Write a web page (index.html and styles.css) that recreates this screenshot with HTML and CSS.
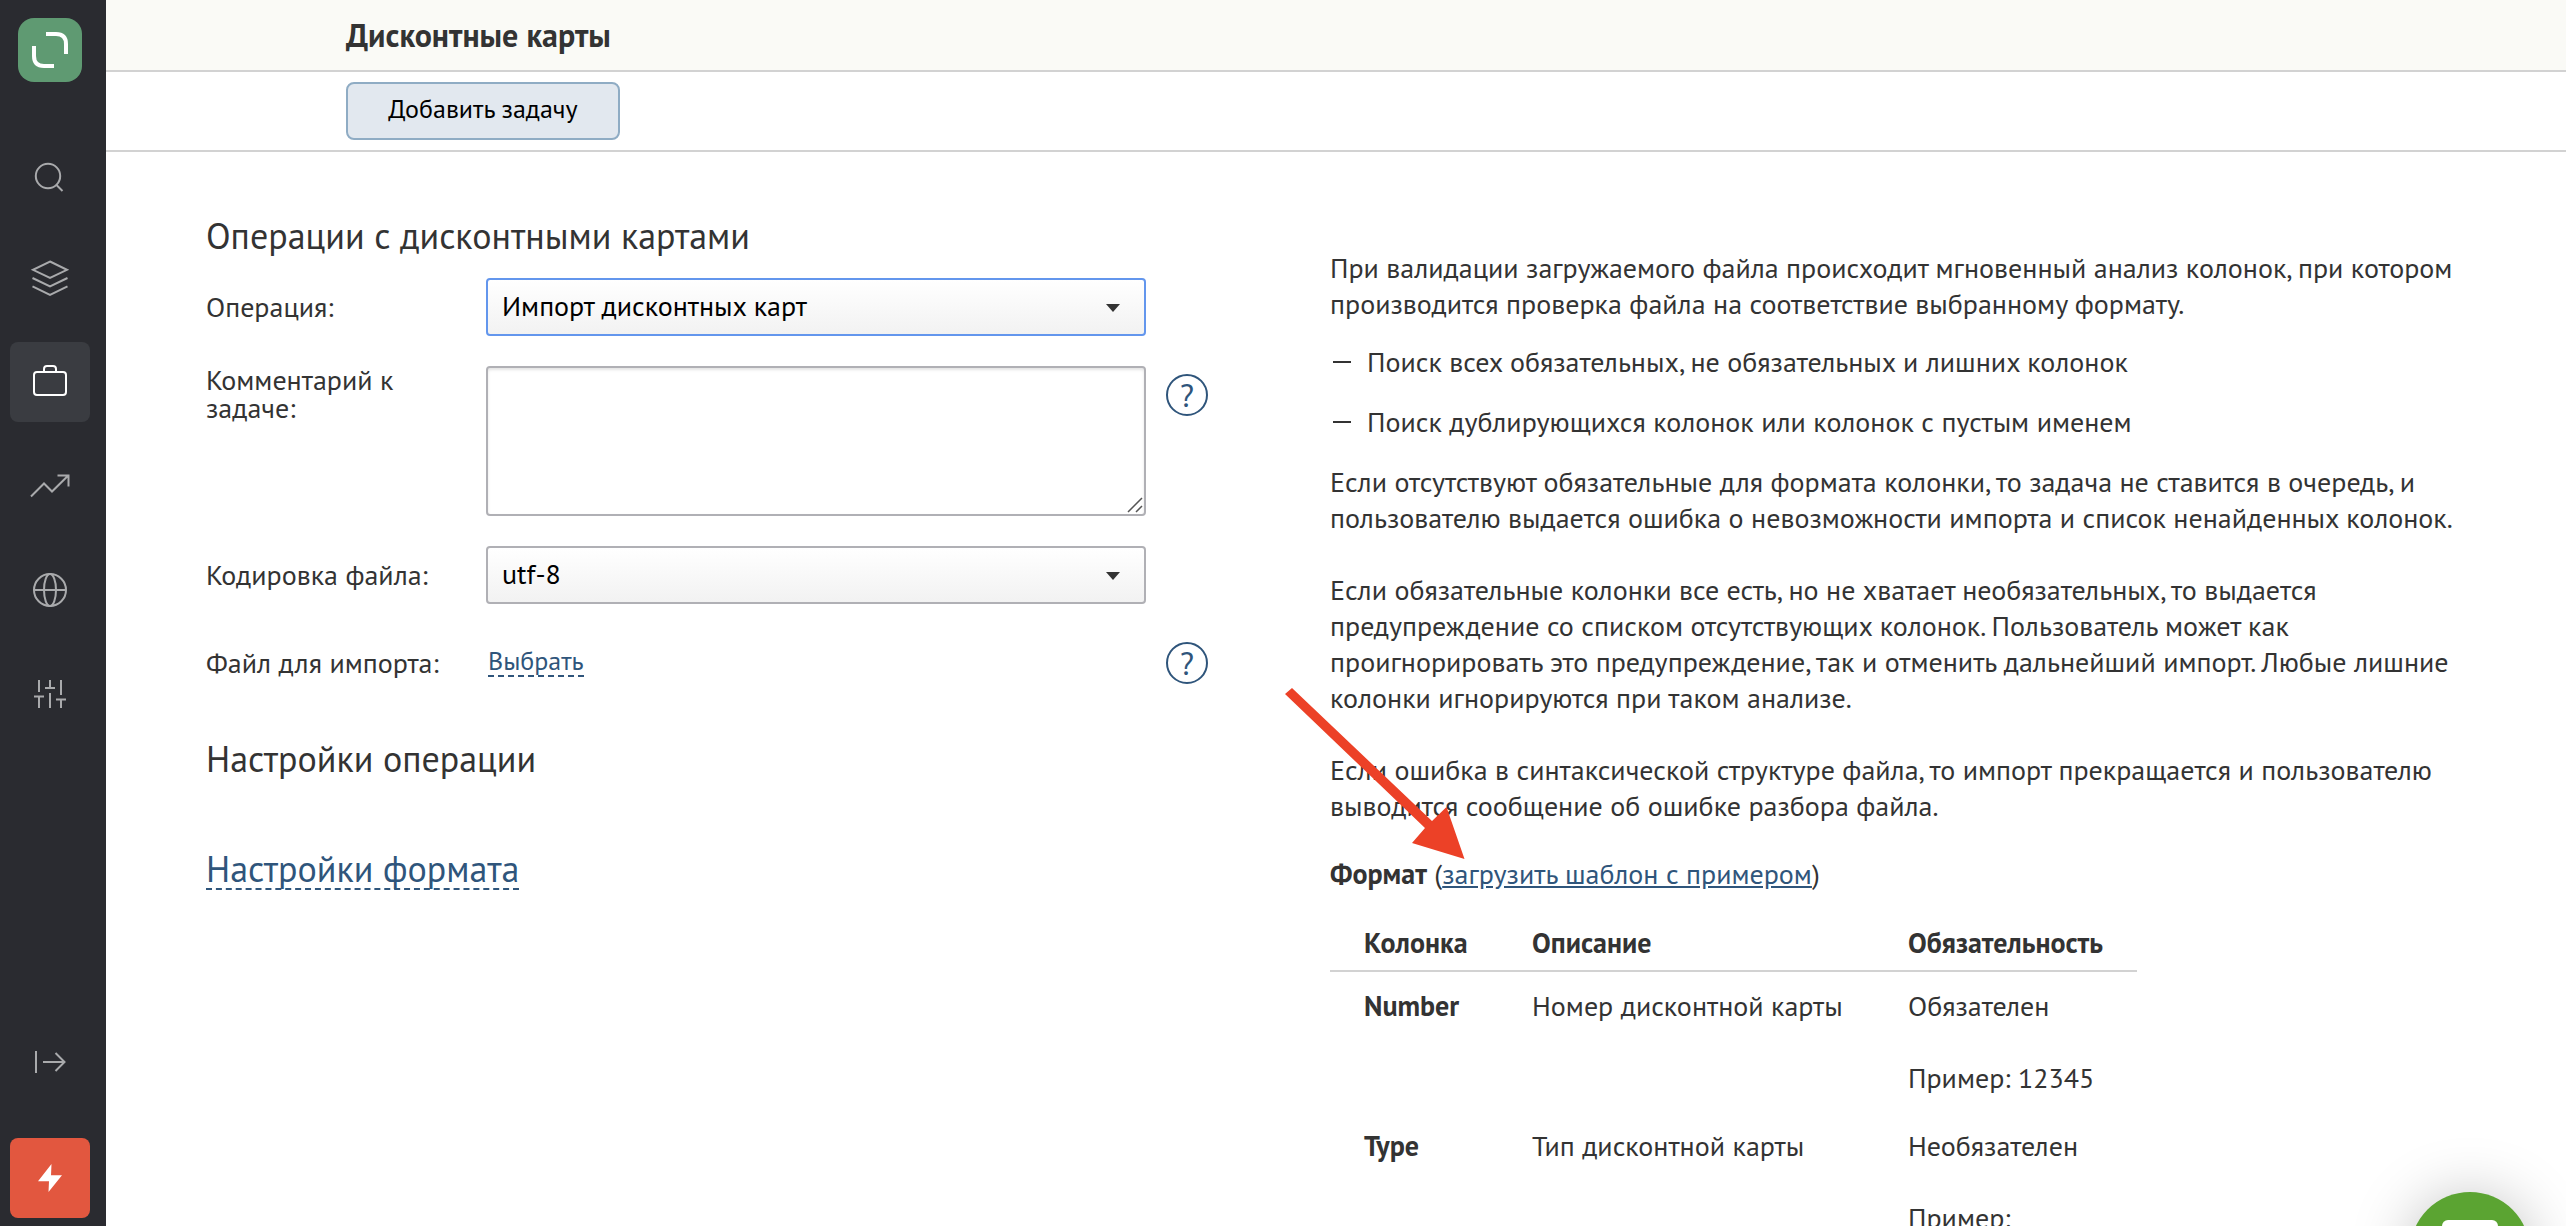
FILE: index.html
```html
<!DOCTYPE html>
<html lang="ru">
<head>
<meta charset="utf-8">
<meta name="viewport" content="width=device-width, initial-scale=1">
<title>Дисконтные карты</title>
<link rel="stylesheet" href="styles.css">
</head>
<body>
<nav class="sidebar">
  <a class="logo" href="#">
    <svg width="64" height="64" viewBox="0 0 64 64" fill="none" stroke="#fff" stroke-width="4"><path d="M28 16h10q10 0 10 10v10M16 28v10q0 10 10 10h10"/></svg>
  </a>
  <a class="nav-item" href="#"><svg width="40" height="40" viewBox="0 0 40 40"><circle cx="18" cy="22" r="12.2"/><path d="M26.500 31l6 6"/></svg></a>
  <a class="nav-item" href="#"><svg width="40" height="40" viewBox="0 0 40 40"><path d="M20 3.500L37 11.800 20 20 3 11.800zM2.500 20L20 28.500 37.500 20M2.500 28.300L20 36.800l17.500-8.500"/></svg></a>
  <a class="nav-item nav-item-active" href="#"><svg width="40" height="40" viewBox="0 0 40 40"><rect x="4" y="10" width="32" height="23" rx="3"/><path d="M14 10V7q0-3 3-3h6q3 0 3 3v3"/></svg></a>
  <a class="nav-item" href="#"><svg width="40" height="40" viewBox="0 0 40 40"><path d="M1 30.500l13-13 8 8L38 9.800M27.500 9.500h11v11"/></svg></a>
  <a class="nav-item" href="#"><svg width="40" height="40" viewBox="0 0 40 40"><circle cx="20" cy="20" r="16"/><ellipse cx="20" cy="20" rx="6" ry="16"/><path d="M4 20h32"/></svg></a>
  <a class="nav-item" href="#"><svg width="40" height="40" viewBox="0 0 40 40"><path d="M9 6v12M4 22.500h10M9 22.500V34M20 6v8M15 14h10M20 19v15M31 6v15M26 25.500h10M31 25.500V34"/></svg></a>
  <span class="sidebar-spacer"></span>
  <a class="nav-item" href="#"><svg width="40" height="40" viewBox="0 0 40 40"><path d="M6 9v22M13 20h22M25.500 11l9 9-9 9"/></svg></a>
  <a class="nav-item nav-item-alert" href="#"><svg width="40" height="40" viewBox="0 0 40 40"><path d="M21.500 6L8 23.200h11L18.500 34 32 17.200H21z"/></svg></a>
</nav>
<div class="page">
  <header class="title-bar"><h1>Дисконтные карты</h1></header>
  <div class="toolbar"><button class="add-button" type="button">Добавить задачу</button></div>
  <main class="content">
    <form class="task-form">
      <h2>Операции с дисконтными картами</h2>
      <div class="row">
        <label for="operation">Операция:</label>
        <div class="control">
          <select id="operation" class="field-focused"><option>Импорт дисконтных карт</option></select>
          <svg class="caret" width="14" height="8" viewBox="0 0 14 8"><path d="M0 0h14L7 8z"/></svg>
        </div>
      </div>
      <div class="row row-top">
        <label for="comment">Комментарий к задаче:</label>
        <div class="control">
          <textarea id="comment"></textarea>
          <svg class="grip" width="16" height="16" viewBox="0 0 16 16"><path d="M1 15L15 1M9 15l6-6"/></svg>
        </div>
        <button class="help" type="button">?</button>
      </div>
      <div class="row">
        <label for="encoding">Кодировка файла:</label>
        <div class="control">
          <select id="encoding"><option>utf-8</option></select>
          <svg class="caret" width="14" height="8" viewBox="0 0 14 8"><path d="M0 0h14L7 8z"/></svg>
        </div>
      </div>
      <div class="row">
        <span>Файл для импорта:</span>
        <div class="control control-link"><a class="dashed" href="#">Выбрать</a></div>
        <button class="help" type="button">?</button>
      </div>
      <h2 class="section">Настройки операции</h2>
      <h2 class="section"><a class="dashed" href="#">Настройки формата</a></h2>
    </form>
    <section class="info">
      <p>При валидации загружаемого файла происходит мгновенный анализ колонок, при котором<br>производится проверка файла на соответствие выбранному формату.</p>
      <ul>
        <li>Поиск всех обязательных, не обязательных и лишних колонок</li>
        <li>Поиск дублирующихся колонок или колонок с пустым именем</li>
      </ul>
      <p>Если отсутствуют обязательные для формата колонки, то задача не ставится в очередь, и<br>пользователю выдается ошибка о невозможности импорта и список ненайденных колонок.<br><br>Если обязательные колонки все есть, но не хватает необязательных, то выдается<br>предупреждение со списком отсутствующих колонок. Пользователь может как<br>проигнорировать это предупреждение, так и отменить дальнейший импорт. Любые лишние<br>колонки игнорируются при таком анализе.<br><br>Если ошибка в синтаксической структуре файла, то импорт прекращается и пользователю<br>выводится сообщение об ошибке разбора файла.</p>
      <p class="format"><b>Формат</b> (<a href="#">загрузить шаблон с примером</a>)</p>
      <table>
        <thead><tr><th>Колонка</th><th>Описание</th><th>Обязательность</th></tr></thead>
        <tbody>
          <tr><th>Number</th><td>Номер дисконтной карты</td><td>Обязателен<br><br>Пример: 12345</td></tr>
          <tr><th>Type</th><td>Тип дисконтной карты</td><td>Необязателен<br><br>Пример:</td></tr>
        </tbody>
      </table>
      <svg class="arrow" width="180" height="172" viewBox="0 0 180 172"><path d="M7 0L147 133l14.500-14L179.500 171 127 155l13-15L0 6z"/></svg>
    </section>
  </main>
</div>
<button class="chat" type="button"><svg width="56" height="64" viewBox="0 0 56 64"><rect width="56" height="44" rx="6"/></svg></button>
</body>
</html>
```
FILE: styles.css
```css
* { box-sizing: border-box; }
body {
  margin: 0;
  height: 100vh;
  display: flex;
  overflow: hidden;
  background: #fff;
  color: #333;
  font: 28px/36px "PT Sans", Lato, "Noto Sans", sans-serif;
}
a { color: #2f557b; }
svg { display: block; }
button, select, textarea { font: inherit; color: #000; margin: 0; }

.sidebar {
  flex: none;
  width: 106px;
  padding: 18px 16px 8px 10px;
  background: #2a2b30;
  display: flex;
  flex-direction: column;
  gap: 24px;
}
.logo {
  width: 64px;
  height: 64px;
  margin: 0 8px 28px;
  border-radius: 16px;
  background: #5f9a72;
}
.nav-item {
  flex: none;
  width: 80px;
  height: 80px;
  border-radius: 8px;
  display: grid;
  place-items: center;
}
.nav-item svg { fill: none; stroke: #a9aaac; stroke-width: 2; }
.nav-item-active { background: #3a3c41; }
.nav-item-active svg { stroke: #fff; }
.nav-item-alert { margin-top: 12px; background: #e2573f; }
.nav-item-alert svg { fill: #fff; stroke: none; }
.sidebar-spacer { flex: 1; }

.page {
  flex: 1;
  min-width: 0;
  overflow: auto;
  scrollbar-width: none;
}
.title-bar {
  height: 72px;
  padding: 0 240px;
  display: flex;
  align-items: center;
  background: #fafaf6;
  border-bottom: 2px solid #d2d2d2;
}
h1 { margin: 0; font-size: 32px; font-weight: 700; }
.toolbar { padding: 10px 240px; border-bottom: 2px solid #d2d2d2; }
.add-button {
  display: block;
  height: 58px;
  min-width: 274px;
  padding: 0 40px 4px;
  border: 2px solid #8facc4;
  border-radius: 8px;
  background: #e2e8ef;
  font-size: 26px;
}

.content {
  display: grid;
  grid-template-columns: 1002px minmax(0, 1fr);
  gap: 122px;
  padding: 64px 100px 0;
}
.task-form { display: flex; flex-direction: column; gap: 30px; }
h2 { margin: 0; font-size: 36px; line-height: 40px; font-weight: 400; }
.task-form h2:first-child { margin-bottom: -8px; }
.row {
  min-height: 58px;
  display: grid;
  grid-template-columns: 280px 660px 42px;
  align-items: center;
}
.row label { line-height: 28px; padding-right: 40px; }
.row-top { align-items: start; }
.control { position: relative; }
.control-link { padding: 0 0 2px 2px; font-size: 26px; line-height: 28px; }
select, textarea {
  display: block;
  width: 100%;
  border: 2px solid #b0b0b5;
  border-radius: 4px;
  outline: 0;
}
select {
  appearance: none;
  height: 58px;
  padding: 0 14px 2px;
  background: linear-gradient(#fff, #f2f2f2);
}
.field-focused { border-color: #6396ed; }
textarea { height: 150px; resize: none; box-shadow: inset 0 2px 3px #e4e4e4; }
.caret { position: absolute; right: 26px; top: 26px; fill: #333; pointer-events: none; }
.grip { position: absolute; right: 3px; bottom: 3px; fill: none; stroke: #555; stroke-width: 1.5; }
.help {
  width: 42px;
  height: 42px;
  padding: 0;
  margin-left: 20px;
  border: 2px solid #2f557b;
  border-radius: 50%;
  background: none;
  color: #2f557b;
  font-size: 32px;
  line-height: 36px;
}
.row-top .help { margin-top: 8px; }
.dashed {
  display: inline-block;
  text-decoration: none;
  border-bottom: 2px dashed #2f557b;
}
.section { margin-top: 18px; line-height: 38px; }
.section + .section { margin-top: 42px; }

.info { position: relative; padding-top: 34px; white-space: nowrap; }
.info p { margin: 0; }
ul { list-style: none; margin: 22px 0 24px; padding: 0; display: grid; gap: 24px; }
li { display: flex; gap: 16px; align-items: center; }
li::before { content: ""; width: 18px; height: 2px; margin-left: 3px; background: #333; }
.info .format { margin: 32px 0 25px; }
table { border-collapse: collapse; width: 807px; table-layout: fixed; }
th, td { padding: 16px 0; text-align: left; vertical-align: top; }
th:first-child { width: 202px; padding-left: 34px; }
th:nth-child(2) { width: 376px; }
thead th { padding: 8px 0 9px; border-bottom: 2px solid #d2d2d2; }
.arrow { position: absolute; left: -45px; top: 472px; fill: #ec4127; }

.chat {
  position: fixed;
  right: 36px;
  bottom: -86px;
  width: 120px;
  height: 120px;
  padding: 28px 32px;
  border: 0;
  border-radius: 50%;
  background: #5ba432;
  box-shadow: 0 4px 60px rgba(0, 0, 0, .25);
}
.chat svg { fill: #fff; }
```
